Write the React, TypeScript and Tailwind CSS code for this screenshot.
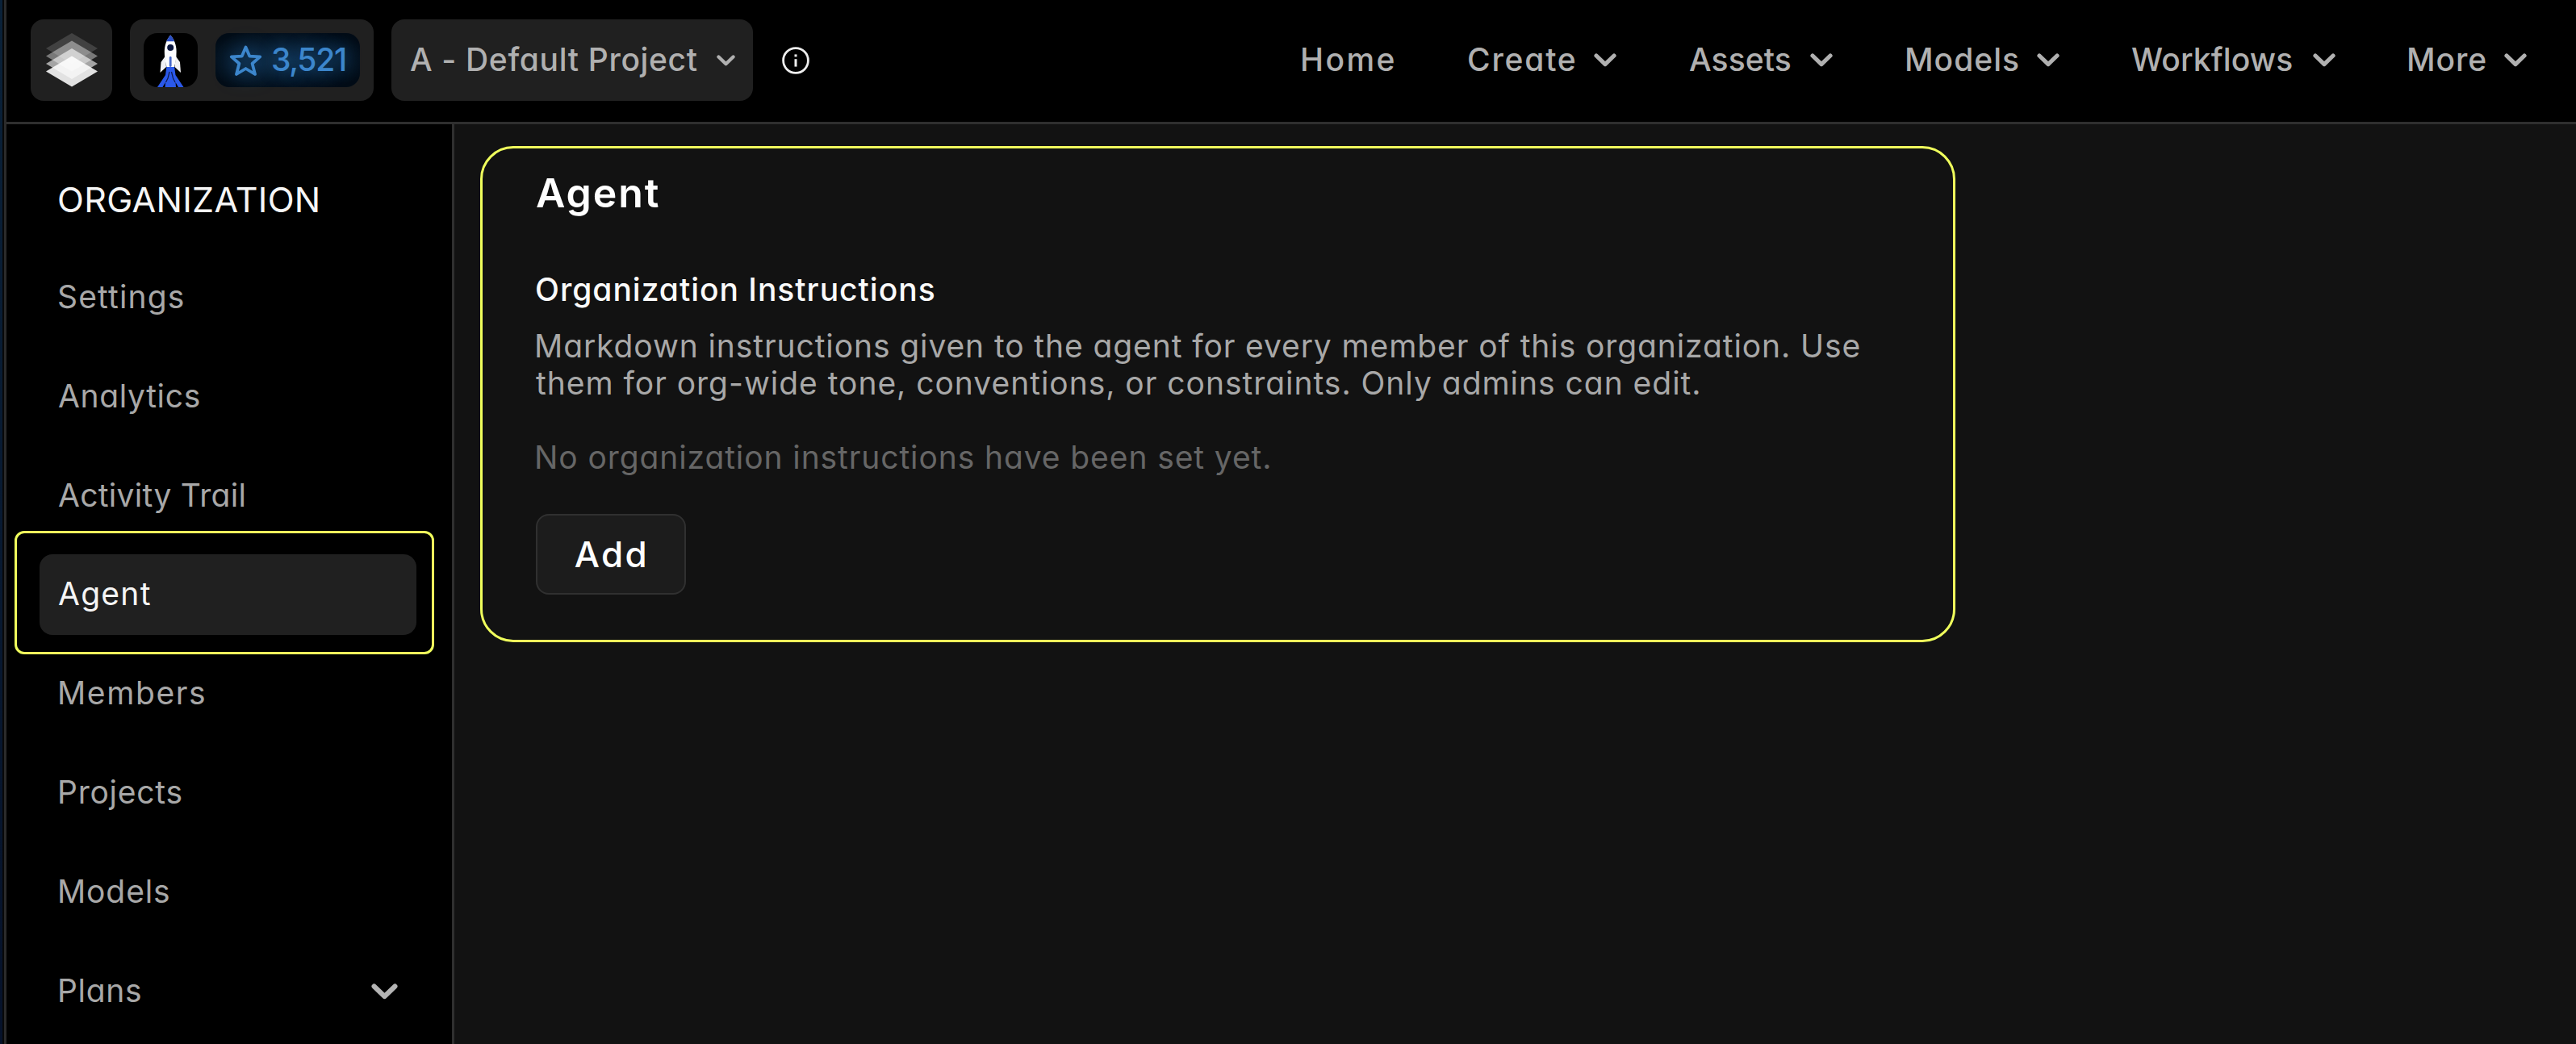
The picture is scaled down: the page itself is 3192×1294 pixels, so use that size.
import React from "react";
import clsx from "clsx";

interface NavEntry {
  label: string;
  item: string;
  text: string;
  menu?: boolean;
}

interface SideEntry {
  label: string;
  text: string;
  active?: boolean;
  expandable?: boolean;
}

const navEntries: NavEntry[] = [
  { label: "Home", item: "w-[114px]", text: "-ml-[3px] tracking-[2.4px]" },
  { label: "Create", item: "w-[184px]", text: "-ml-[1px] tracking-[1.8px]", menu: true },
  { label: "Assets", item: "w-[177px]", text: "-ml-[1px] tracking-[0.1px]", menu: true },
  { label: "Models", item: "w-[190px]", text: "-ml-[2px] tracking-[1px]", menu: true },
  { label: "Workflows", item: "w-[251px]", text: "-ml-[2px] tracking-[0.15px]", menu: true },
  { label: "More", item: "w-[146px]", text: "-ml-[3px] tracking-[0.95px]", menu: true },
];

const sideEntries: SideEntry[] = [
  { label: "Settings", text: "-ml-[2px] tracking-[1.15px]" },
  { label: "Analytics", text: "-ml-[1px] tracking-[0.65px]" },
  { label: "Activity Trail", text: "-ml-[1px] tracking-[0.3px]" },
  { label: "Agent", text: "-ml-[1px] tracking-[1.27px]", active: true },
  { label: "Members", text: "-ml-[2px] tracking-[1.6px]" },
  { label: "Projects", text: "-ml-[2px] tracking-[0.76px]" },
  { label: "Models", text: "-ml-[2px] tracking-[0.88px]" },
  { label: "Plans", text: "-ml-[2px] tracking-[0.65px]", expandable: true },
];

const Chevron: React.FC<{ className?: string }> = ({ className }) => (
  <svg viewBox="0 0 28 17" fill="none" className={clsx("shrink-0", className)}>
    <path
      d="M3 3L14 13.6L25 3"
      stroke="currentColor"
      strokeWidth="5.2"
      strokeLinecap="round"
      strokeLinejoin="round"
    />
  </svg>
);

const LayersLogo = () => (
  <svg width="64" height="67" viewBox="0 0 64 67" fill="#fff">
    <path d="M32 0L64 19L32 38L0 19Z" opacity="0.15" />
    <path d="M32 9.5L64 28.5L32 47.5L0 28.5Z" opacity="0.4" />
    <path d="M32 19L64 38L32 57L0 38Z" opacity="0.6" />
    <path d="M32 28.5L64 47.5L32 66.5L0 47.5Z" opacity="0.87" />
  </svg>
);

const RocketAvatar = () => (
  <svg width="67" height="67" viewBox="0 0 67 67" className="rounded-[17px] bg-black">
    <path d="M26.5 29L21.5 36L20.5 49L28 42Z" fill="#f1f1f4" />
    <path d="M40 29L45 36L46 49L38.5 42Z" fill="#f1f1f4" />
    <path
      d="M28.5 41H38L39.5 52L49.5 67H43L39.5 61L40 67H26.5L27 61L23.5 67H17L27 52Z"
      fill="#2b59ea"
    />
    <path d="M32 48L30 56L27.5 61M34.5 48L36.5 56L39 61" stroke="#101c4c" strokeWidth="1.2" fill="none" />
    <path
      d="M33.2 2.5C38 8 40.6 15 40.6 23C40.6 31 39.5 37 38 42H28.5C27 37 25.8 31 25.8 23C25.8 15 28.5 8 33.2 2.5Z"
      fill="#fdfdff"
    />
    <path d="M33.2 2.5C35.3 4.8 37 7.4 38.2 10.3H28.2C29.4 7.4 31.1 4.8 33.2 2.5Z" fill="#2b4fc4" />
    <circle cx="33.2" cy="18" r="4" fill="#0b1740" />
    <rect x="31.8" y="29" width="2.8" height="13" rx="1.4" fill="#4869c9" />
  </svg>
);

const StarIcon = () => (
  <svg
    width="41"
    height="40"
    viewBox="0 0 41 40"
    fill="none"
    className="drop-shadow-[0_0_12px_#1b5c96]"
  >
    <path
      d="M20.5 3.4L25.2 14.6L38.2 15.4L28.6 23.8L32 37L20.5 30L9 37L12.4 23.8L2.8 15.4L15.8 14.6Z"
      stroke="#3c86cc"
      strokeWidth="3.8"
      strokeLinejoin="round"
    />
  </svg>
);

const InfoIcon = () => (
  <svg width="34" height="34" viewBox="0 0 34 34" fill="none">
    <circle cx="17" cy="17" r="15.4" stroke="#ededed" strokeWidth="2.8" />
    <path d="M17 15.2V24.6" stroke="#ededed" strokeWidth="3" />
    <rect x="15.5" y="9.4" width="3" height="3" fill="#ededed" />
  </svg>
);

const Header = () => (
  <header className="flex h-[154px] items-center justify-between border-b-[3px] border-[#2f2f2f] bg-black pr-[61px] pb-[2px] pl-[30px] font-medium text-[#b0b0b0]">
    <div className="flex items-center">
      <div className="flex h-[101px] w-[101px] items-center justify-center rounded-[16px] bg-[#202020]">
        <LayersLogo />
      </div>

      <div className="ml-[22px] flex h-[101px] w-[302px] items-center justify-between rounded-[16px] bg-[#202020] px-[17px]">
        <RocketAvatar />
        <div className="flex h-[67px] w-[179px] items-center rounded-[17px] bg-[#020c16] bg-[radial-gradient(ellipse_at_center,#0f2c46_0%,#07192a_50%,#020c16_85%)] pl-[17px]">
          <StarIcon />
          <span className="ml-[11px] pb-[2px] text-[39px] leading-[46px] tracking-[-1.3px] text-[#3c86cc] [text-shadow:0_0_18px_#174f82]">
            3,521
          </span>
        </div>
      </div>

      <div className="ml-[22px] flex h-[101px] w-[448px] items-center justify-between rounded-[16px] bg-[#202020] pr-[22px] pl-[23px]">
        <span className="pb-[2px] text-[39px] leading-[46px] tracking-[0.65px] whitespace-nowrap">
          A - Default Project
        </span>
        <Chevron className="h-[14px] w-[23px]" />
      </div>

      <div className="ml-[36px]">
        <InfoIcon />
      </div>
    </div>

    <nav className="flex items-center gap-[91px]">
      {navEntries.map(({ label, item, text, menu }) => (
        <div key={label} className={clsx("flex items-center justify-between", item)}>
          <span className={clsx("pb-[2px] text-[39px] leading-[46px] whitespace-nowrap", text)}>
            {label}
          </span>
          {menu && <Chevron className="h-[17px] w-[28px]" />}
        </div>
      ))}
    </nav>
  </header>
);

const Sidebar = () => (
  <aside className="w-[555px] shrink-0 border-r-[3px] border-[#2f2f2f] bg-black pt-[63px] pl-[41px]">
    <h2 className="mb-[42px] pl-[22px] text-[43px] leading-[60px] tracking-[0.3px] text-[#f5f5f5]">
      ORGANIZATION
    </h2>
    <ul className="flex flex-col gap-[22.8px]">
      {sideEntries.map(({ label, text, active, expandable }) => (
        <li
          key={label}
          className={clsx(
            "relative flex h-[100px] w-[467px] items-center justify-between rounded-[16px] pr-[23px] pl-[24px]",
            active ? "bg-[#202020] text-[#f5f5f5]" : "text-[#a8a8a8]"
          )}
        >
          <span className={clsx("pb-[2px] text-[39px] leading-[46px] whitespace-nowrap", text)}>
            {label}
          </span>
          {expandable && <Chevron className="h-[20px] w-[33px] text-[#b4b4b4]" />}
          {active && (
            <div className="absolute -top-[29px] -left-[31px] h-[153px] w-[520px] rounded-[12px] border-[3px] border-[#f0ff5c]" />
          )}
        </li>
      ))}
    </ul>
  </aside>
);

const AgentPanel = () => (
  <section className="mt-[27px] ml-[32px] h-[615px] w-[1828px] rounded-[41px] border-[3px] border-[#f0ff5c] pt-[25px] pl-[66px]">
    <h1 className="text-[50px] leading-[60px] font-semibold tracking-[1.9px] text-white">
      Agent
    </h1>
    <h3 className="mt-[67px] -ml-[1px] text-[39px] leading-[46px] font-medium tracking-[0.98px] text-[#fafafa]">
      Organization Instructions
    </h3>
    <p className="mt-[24px] text-[39px] leading-[46px] whitespace-nowrap text-[#a8a8a8]">
      <span className="-ml-[2px] tracking-[0.9px]">
        Markdown instructions given to the agent for every member of this organization. Use
      </span>
      <br />
      <span className="tracking-[0.97px]">
        them for org-wide tone, conventions, or constraints. Only admins can edit.
      </span>
    </p>
    <p className="mt-[46px] -ml-[2px] text-[39px] leading-[46px] tracking-[0.9px] text-[#666666]">
      No organization instructions have been set yet.
    </p>
    <button className="mt-[47px] flex h-[100px] w-[186px] items-center justify-center rounded-[16px] border-2 border-[#303030] bg-[#1c1c1c] pb-[1px] pl-[2px] text-[44px] leading-[54px] font-medium tracking-[2.4px] text-white">
      Add
    </button>
  </section>
);

export default function App() {
  return (
    <div className="flex h-[1294px] w-[3192px] overflow-hidden bg-black font-['Inter',sans-serif] [font-feature-settings:'cv11']">
      <div className="w-[5px] shrink-0 border-r-2 border-[#080808] bg-gradient-to-b from-[#0a2138] to-[#06122a]" />
      <div className="flex grow flex-col border-l-[3px] border-[#2b2b2b] bg-[#121212]">
        <Header />
        <div className="flex grow">
          <Sidebar />
          <main className="grow">
            <AgentPanel />
          </main>
        </div>
      </div>
    </div>
  );
}
